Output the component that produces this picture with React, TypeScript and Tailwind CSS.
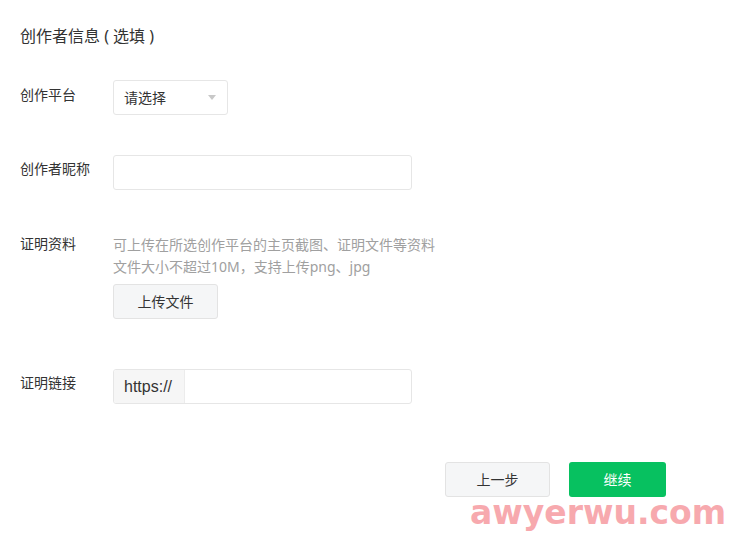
import React from "react";

const font = { fontFamily: '"Noto Sans", "Noto Sans CJK SC", sans-serif' };

const Label = ({ children }: { children: React.ReactNode }) => (
  <div className="w-[93px] shrink-0 text-[14px] leading-[20px] text-[#333]">{children}</div>
);

const App = () => {
  return (
    <div
      className="relative h-[547px] w-[747px] overflow-hidden bg-white"
      style={font}
    >
      <div className="flex flex-col pl-[20px] pt-[25px]">
        <h2 className="text-[16px] leading-[22px] font-normal text-[#333]">
          创作者信息 ( 选填 )
        </h2>

        {/* platform */}
        <div className="mt-[33px] flex items-start">
          <div className="pt-[5px]">
            <Label>创作平台</Label>
          </div>
          <div className="flex h-[35px] w-[115px] items-center justify-between rounded-[3px] border border-[#e6e6e6] pl-[10px] pr-[11px]">
            <span className="text-[14px] text-[#333]">请选择</span>
            <span className="h-0 w-0 border-x-[4px] border-t-[5px] border-x-transparent border-t-[#c8c8c8]" />
          </div>
        </div>

        {/* nickname */}
        <div className="mt-[40px] flex items-start">
          <div className="pt-[4px]">
            <Label>创作者昵称</Label>
          </div>
          <div className="h-[35px] w-[299px] rounded-[3px] border border-[#e6e6e6]" />
        </div>

        {/* proof */}
        <div className="mt-[44px] flex items-start">
          <div className="pt-[0px]">
            <Label>证明资料</Label>
          </div>
          <div className="flex flex-col">
            <p className="text-[14px] leading-[22px] text-[#a0a0a0]">
              可上传在所选创作平台的主页截图、证明文件等资料
            </p>
            <p className="text-[14px] leading-[22px] text-[#a0a0a0]">
              文件大小不超过10M，支持上传png、jpg
            </p>
            <button className="mt-[6px] h-[35px] w-[105px] rounded-[3px] border border-[#e3e3e3] bg-[#f5f6f7] text-[14px] text-[#333]">
              上传文件
            </button>
          </div>
        </div>

        {/* link */}
        <div className="mt-[50px] flex items-start">
          <div className="pt-[4px]">
            <Label>证明链接</Label>
          </div>
          <div className="flex h-[35px] w-[299px] overflow-hidden rounded-[3px] border border-[#e6e6e6]">
            <div
              className="flex w-[71px] items-center border-r border-[#ececec] bg-[#f6f6f6] pl-[10px] text-[16px] text-[#333]"
              style={{ fontFamily: '"Liberation Sans", sans-serif' }}
            >
              https://
            </div>
            <div className="flex-1" />
          </div>
        </div>

        {/* actions */}
        <div className="mt-[58px] flex gap-[19px] pl-[425px]">
          <button className="h-[35px] w-[105px] rounded-[3px] border border-[#e3e3e3] bg-[#f5f6f7] text-[14px] text-[#333]">
            上一步
          </button>
          <button className="h-[35px] w-[97px] rounded-[3px] bg-[#07c160] text-[14px] text-white">
            继续
          </button>
        </div>
      </div>

      {/* watermark */}
      <div
        className="absolute left-[470px] top-[493px] text-[33px] font-bold leading-[40px] text-[#f7a9ae]"
        style={{ fontFamily: '"DejaVu Sans", sans-serif' }}
      >
        awyerwu.com
      </div>
    </div>
  );
};

export default App;
